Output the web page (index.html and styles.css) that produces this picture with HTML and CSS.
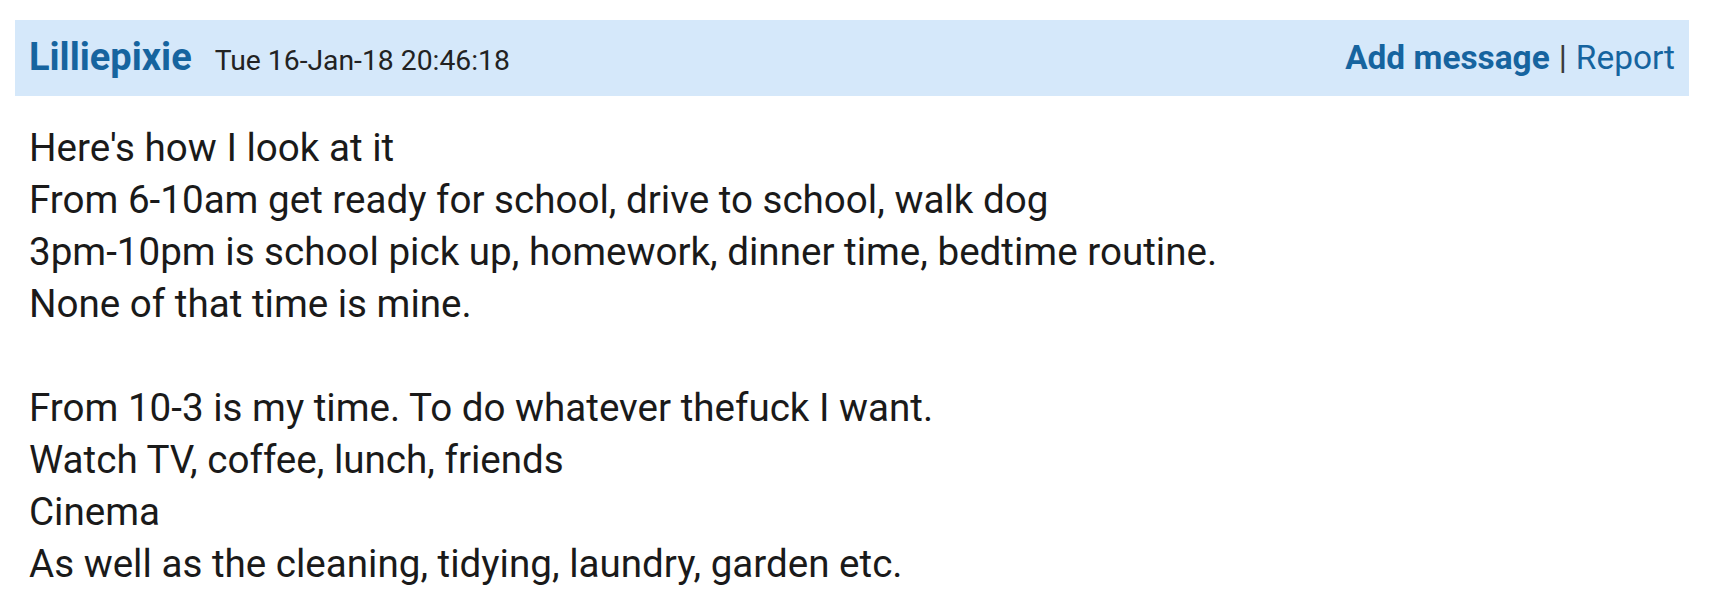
FILE: index.html
```html
<!DOCTYPE html>
<html lang="en">
<head>
    <meta charset="UTF-8">
    <meta name="viewport" content="width=device-width, initial-scale=1.0">
    <title>Thread post</title>
    <link rel="stylesheet" href="styles.css">
</head>
<body>
    <div class="post">
        <div class="post-header">
            <div class="post-meta">
                <a href="#" class="poster">Lilliepixie</a>
                <span class="post-date">Tue 16-Jan-18 20:46:18</span>
            </div>
            <div class="post-actions">
                <a href="#" class="add-message">Add message</a>
                <span class="sep">|</span>
                <a href="#" class="report">Report</a>
            </div>
        </div>

        <div class="post-body">
            <p>Here's how I look at it<br>
            From 6-10am get ready for school, drive to school, walk dog<br>
            3pm-10pm is school pick up, homework, dinner time, bedtime routine.<br>
            None of that time is mine.</p>
            <p>From 10-3 is my time. To do whatever thefuck I want.<br>
            Watch TV, coffee, lunch, friends<br>
            Cinema<br>
            As well as the cleaning, tidying, laundry, garden etc.</p>
        </div>
    </div>
</body>
</html>
```

FILE: styles.css
```css
:root {
    --header-bg: #d5e8fa;
    --link-color: #16649f;
    --text-color: #1a1a1a;
}

* {
    margin: 0;
    padding: 0;
    box-sizing: border-box;
}

body {
    font-family: Roboto, 'Liberation Sans', sans-serif;
    color: var(--text-color);
    background: #ffffff;
    padding: 20px 24px 0 15px;
}

a {
    color: var(--link-color);
    text-decoration: none;
}

.post-header {
    display: flex;
    justify-content: space-between;
    align-items: center;
    height: 76px;
    background-color: var(--header-bg);
    padding: 0 14px 0 14px;
}

.post-meta {
    display: flex;
    align-items: baseline;
    gap: 23px;
    margin-top: -2px;
}

.poster {
    font-size: 38px;
    font-weight: 700;
}

.post-date {
    font-size: 28.3px;
    color: #222222;
}

.post-actions {
    display: flex;
    align-items: baseline;
    gap: 9px;
    font-size: 33.4px;
    margin-top: -2px;
}

.add-message {
    font-weight: 700;
}

.sep {
    color: #3a3a3a;
}

.post-body {
    padding: 26px 14px 0 14px;
    font-size: 38.6px;
    line-height: 52px;
}

.post-body p + p {
    margin-top: 52px;
}
```
